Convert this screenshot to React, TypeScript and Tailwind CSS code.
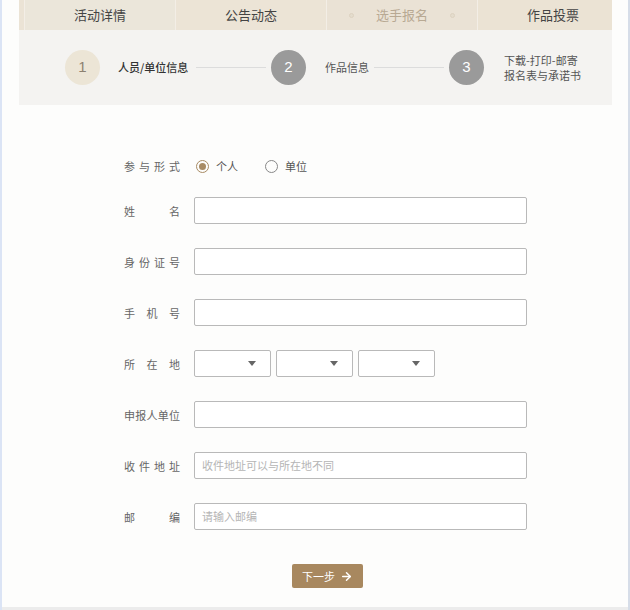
import React from "react";
import { ArrowRight } from "lucide-react";

const font = "font-['Noto_Sans_CJK_SC','Noto_Sans',sans-serif]";

function Label({ text }: { text: string }) {
  return (
    <div className="w-[56px] shrink-0 text-[11px] leading-[14px] text-[#666] text-justify [text-align-last:justify] mr-[14px]">
      {text}
    </div>
  );
}

function Row({ label, children }: { label: string; children: React.ReactNode }) {
  return (
    <div className="flex items-center">
      <Label text={label} />
      {children}
    </div>
  );
}

function Input({ placeholder }: { placeholder?: string }) {
  return (
    <div className="w-[333px] h-[27px] border border-[#b9b9b9] rounded-[2px] bg-white flex items-center px-[7px] text-[11px] text-[#b5b5b5]">
      {placeholder ?? ""}
    </div>
  );
}

function Select() {
  return (
    <div className="w-[77px] h-[27px] border border-[#b9b9b9] rounded-[2px] bg-white flex items-center justify-end pr-[14px]">
      <svg width="8" height="5" viewBox="0 0 8 5">
        <path d="M0 0 L8 0 L4 5 Z" fill="#666" />
      </svg>
    </div>
  );
}

function Step({ n, active }: { n: number; active?: boolean }) {
  return (
    <div
      className={
        "w-[35px] h-[35px] rounded-full shrink-0 flex items-center justify-center text-[15px] font-['Liberation_Sans',sans-serif] " +
        (active ? "bg-[#ece5d6] text-[#8c8070]" : "bg-[#9a9a9a] text-white")
      }
    >
      {n}
    </div>
  );
}

export default function App() {
  return (
    <div
      className={
        "w-[630px] h-[610px] bg-[#fdfdfc] border-l-[2px] border-r-[2px] border-l-[#dbe4f5] border-r-[#d6dde8] flex flex-col " +
        font
      }
    >
      {/* top panel */}
      <div className="ml-[17px] w-[593px] overflow-hidden shrink-0">
        <div className="h-[30px] bg-[#ebe3d5] flex pl-[5px]">
          <div className="w-[151px] shrink-0 border-l border-[#f3eee6] flex items-center justify-center text-[13px] text-[#444] bg-[#ebe6da]">
            活动详情
          </div>
          <div className="w-[151px] shrink-0 border-l border-[#f3eee6] flex items-center justify-center text-[13px] text-[#444] bg-[#ece4d6]">
            公告动态
          </div>
          <div className="w-[151px] shrink-0 border-l border-[#f3eee6] flex items-center justify-center text-[13px] text-[#b8a993] bg-[#eae2d5] gap-[22px]">
            <span className="w-[5px] h-[5px] rounded-full border border-[#ddd2c0] bg-[#e4dccd]" />
            <span>选手报名</span>
            <span className="w-[5px] h-[5px] rounded-full border border-[#ddd2c0] bg-[#e4dccd]" />
          </div>
          <div className="w-[151px] shrink-0 border-l border-[#f3eee6] flex items-center justify-center text-[13px] text-[#444] bg-[#ebe3d4]">
            作品投票
          </div>
        </div>
        <div className="h-[75px] bg-[#f4f3f1] flex items-center pl-[46px]">
          <Step n={1} active />
          <div className="ml-[18px] w-[73px] whitespace-nowrap text-[11px] font-medium text-[#333]">人员/单位信息</div>
          <div className="ml-[5px] w-[70px] h-px bg-[#dcdcdc]" />
          <div className="ml-[5px]">
            <Step n={2} />
          </div>
          <div className="ml-[19px] w-[44px] whitespace-nowrap text-[11px] text-[#555]">作品信息</div>
          <div className="ml-[5px] w-[70px] h-px bg-[#dcdcdc]" />
          <div className="ml-[5px]">
            <Step n={3} />
          </div>
          <div className="ml-[20px] text-[11px] leading-[15px] text-[#555] whitespace-nowrap">
            <div>下载-打印-邮寄</div>
            <div>报名表与承诺书</div>
          </div>
        </div>
      </div>

      {/* form */}
      <div className="flex-1 flex flex-col pl-[122px] pt-[51px]">
        <div className="flex items-center h-[20px]">
          <Label text="参与形式" />
          <div className="flex items-center ml-[2px]">
            <span className="w-[13px] h-[13px] rounded-full border border-[#a88b64] flex items-center justify-center">
              <span className="w-[7px] h-[7px] rounded-full bg-[#a88b64]" />
            </span>
            <span className="ml-[7px] text-[11px] text-[#555]">个人</span>
            <span className="ml-[27px] w-[13px] h-[13px] rounded-full border border-[#888]" />
            <span className="ml-[7px] text-[11px] text-[#555]">单位</span>
          </div>
        </div>
        <div className="flex flex-col gap-[24px] mt-[21px]">
          <Row label="姓名">
            <Input />
          </Row>
          <Row label="身份证号">
            <Input />
          </Row>
          <Row label="手机号">
            <Input />
          </Row>
          <Row label="所在地">
            <div className="flex gap-[5px]">
              <Select />
              <Select />
              <Select />
            </div>
          </Row>
          <Row label="申报人单位">
            <Input />
          </Row>
          <Row label="收件地址">
            <Input placeholder="收件地址可以与所在地不同" />
          </Row>
          <Row label="邮编">
            <Input placeholder="请输入邮编" />
          </Row>
        </div>
        <div className="mt-[34px] ml-[168px] w-[71px] h-[24px] rounded-[2px] bg-[#a8885f] flex items-center justify-center gap-[5px] text-white text-[11px]">
          <span>下一步</span>
          <ArrowRight size={13} strokeWidth={2.75} />
        </div>
      </div>
      <div className="h-[3px] bg-[#ececec] shrink-0" />
    </div>
  );
}
